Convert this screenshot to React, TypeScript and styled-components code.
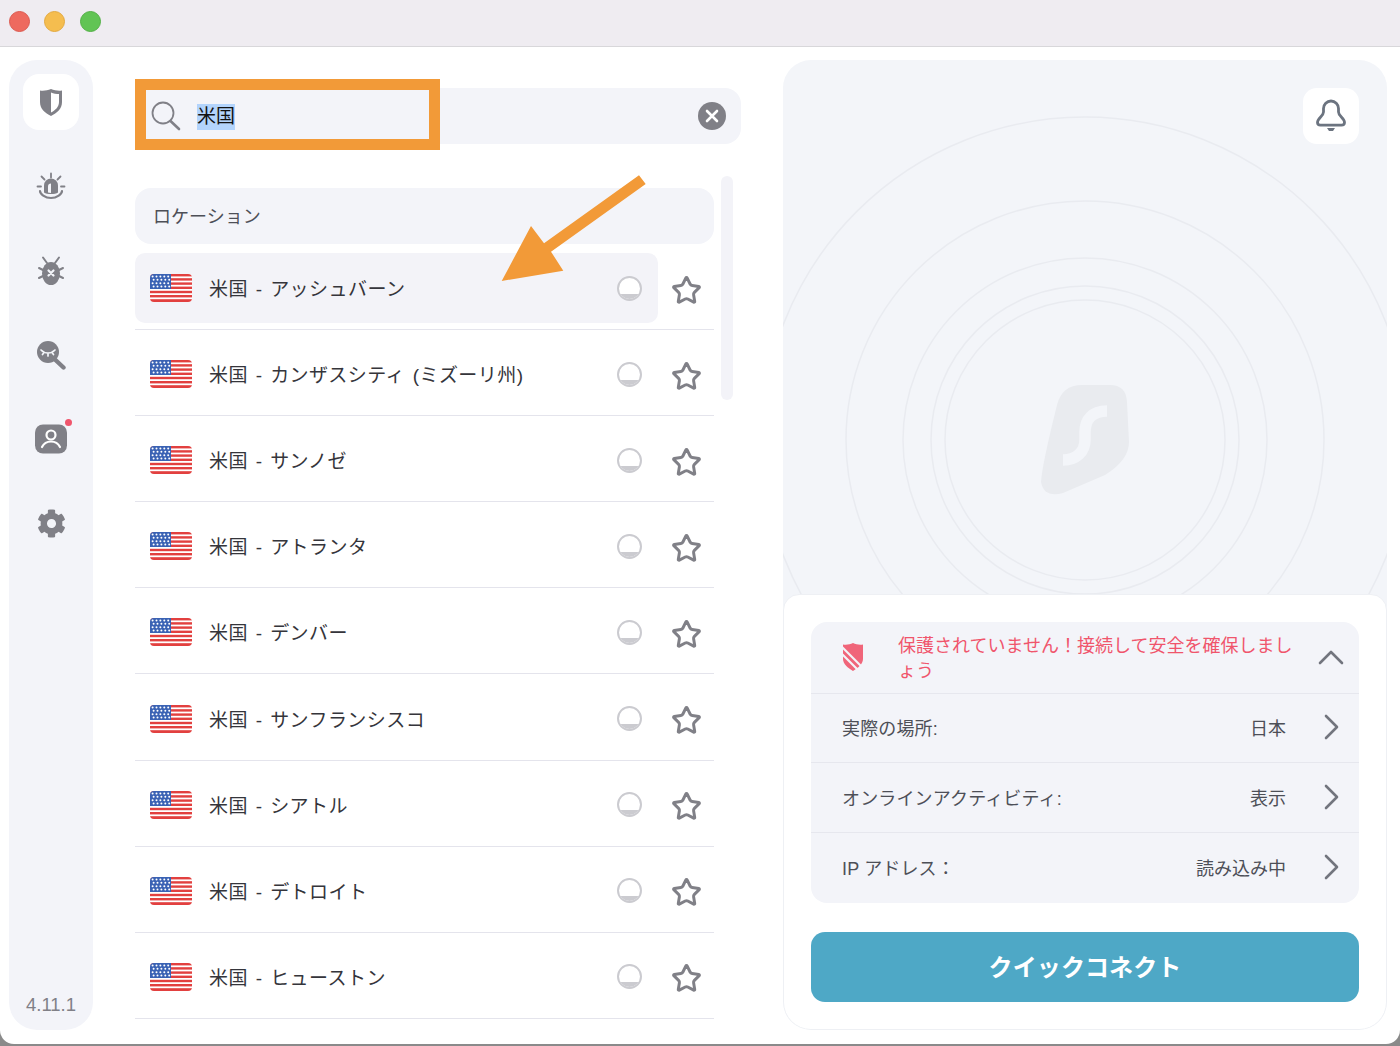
import { FaCog } from "react-icons/fa";
import { Star } from "lucide-react";
import styled, { createGlobalStyle } from "styled-components";

const GlobalStyle = createGlobalStyle`
  html, body {
    margin: 0;
    padding: 0;
    background: #8a8a8a;
  }
  body {
    font-family: "Liberation Sans", "Noto Sans CJK JP", sans-serif;
    color: #3a3a40;
  }
  * {
    box-sizing: border-box;
  }
`;

const Page = styled.div`
  width: 1400px;
  height: 1046px;
  overflow: hidden;
`;
const Window = styled.div`
  width: 1400px;
  height: 1044px;
  overflow: hidden;
  background: #fff;
  border-radius: 0 0 14px 14px;
  display: flex;
  flex-direction: column;
`;
const TitleBar = styled.div`
  height: 47px;
  flex: none;
  background: #efecf1;
  border-bottom: 1px solid #d8d7da;
  display: flex;
  align-items: flex-start;
  gap: 14.5px;
  padding: 10.5px 0 0 8.5px;
`;
const TrafficLight = styled.span<{ $color: string; $edge: string }>`
  width: 21px;
  height: 21px;
  border-radius: 50%;
  background: ${(p) => p.$color};
  border: 1px solid ${(p) => p.$edge};
`;
const Main = styled.div`
  flex: 1;
  display: grid;
  grid-template-columns: 84px 606px 604px;
  column-gap: 42px;
  padding: 13px 13px 14px 9px;
  min-height: 0;
`;

/* sidebar */
const Sidebar = styled.nav`
  background: #f3f4f9;
  border-radius: 28px;
  padding: 14px 0;
  display: flex;
  flex-direction: column;
  align-items: center;
  gap: 28.3px;
`;
const NavItem = styled.div<{ $active?: boolean }>`
  position: relative;
  width: 56px;
  height: 56px;
  flex: none;
  display: flex;
  align-items: center;
  justify-content: center;
  border-radius: 16px;
  background: ${(p) => (p.$active ? "#fff" : "transparent")};
  color: #808087;
`;
const NavDot = styled.span`
  position: absolute;
  top: 8px;
  right: 7px;
  width: 7px;
  height: 7px;
  border-radius: 50%;
  background: #f0556c;
`;
const Version = styled.div`
  margin-top: auto;
  font-size: 18.5px;
  color: #808087;
`;

/* middle column */
const Column = styled.section`
  position: relative;
  padding-top: 28px;
  display: flex;
  flex-direction: column;
  min-height: 0;
`;
const SearchBar = styled.div`
  position: relative;
  height: 56px;
  flex: none;
  background: #f3f4f9;
  border-radius: 16px;
  display: flex;
  align-items: center;
  padding: 0 15px 0 16px;
`;
const SearchFrame = styled.div`
  position: absolute;
  left: 0;
  top: -9px;
  width: 305px;
  height: 71px;
  border: 11px solid #f29a38;
  pointer-events: none;
`;
const SearchText = styled.span`
  margin: 2px 0 0 16px;
  font-size: 19px;
  line-height: 26px;
  color: #111;
  background: #b3d4fc;
`;
const ClearButton = styled.span`
  margin-left: auto;
  width: 28px;
  height: 28px;
  border-radius: 50%;
  background: #808087;
  display: flex;
  align-items: center;
  justify-content: center;
`;
const ListArea = styled.div`
  flex: 1;
  margin-top: 32px;
  display: flex;
  gap: 7px;
  min-height: 0;
  overflow: hidden;
`;
const List = styled.div`
  width: 579px;
  flex: none;
  padding-top: 12px;
`;
const Scrollbar = styled.div`
  width: 12px;
  height: 224px;
  border-radius: 6px;
  background: #f3f3f8;
`;
const ListHeader = styled.div`
  height: 56px;
  background: #f3f4f9;
  border-radius: 16px;
  display: flex;
  align-items: center;
  padding: 0 0 2px 18px;
  font-size: 18px;
  color: #4d4f57;
`;
const Row = styled.div`
  height: 86.1px;
  padding: 9px 0 6px;
  border-bottom: 1px solid #e4e4ec;
  display: flex;
`;
const RowMain = styled.div<{ $active?: boolean }>`
  width: 523px;
  flex: none;
  display: flex;
  align-items: center;
  padding: 0 16px 0 15px;
  border-radius: 10px;
  background: ${(p) => (p.$active ? "#f3f3f8" : "transparent")};
`;
const RowName = styled.span`
  margin: 0 0 1px 17px;
  flex: 1;
  font-size: 19px;
  letter-spacing: 0.45px;
  word-spacing: 2px;
  white-space: nowrap;
  color: #35353b;
`;
const Ping = styled.span`
  position: relative;
  width: 25px;
  height: 25px;
  border-radius: 50%;
  border: 2px solid #cbcbd0;
  overflow: hidden;
  background: #fff;
  &::after {
    content: "";
    position: absolute;
    left: 0;
    right: 0;
    bottom: 0;
    height: 5px;
    background: #cbcbd0;
  }
`;
const StarCell = styled.span`
  flex: 1;
  display: flex;
  align-items: center;
  justify-content: center;
  padding-top: 4px;
  color: #808087;
`;
const ArrowMark = styled.svg`
  position: absolute;
  left: 365px;
  top: 115px;
  pointer-events: none;
`;

/* right panel */
const Panel = styled.section`
  background: #f3f5f9;
  border-radius: 28px;
  display: flex;
  flex-direction: column;
  overflow: hidden;
  min-height: 0;
`;
const Stage = styled.div`
  position: relative;
  flex: 1;
  display: flex;
  justify-content: center;
  overflow: hidden;
`;
const Rings = styled.svg`
  position: absolute;
  inset: 0;
`;
const Logo = styled.svg`
  position: relative;
  margin: 300px 10px 0 0;
`;
const BellTile = styled.div`
  position: absolute;
  top: 28px;
  right: 28px;
  width: 56px;
  height: 56px;
  border-radius: 14px;
  background: #fff;
  display: flex;
  align-items: center;
  justify-content: center;
`;
const Card = styled.div`
  height: 436px;
  flex: none;
  background: #fff;
  border: 1px solid #eef0f4;
  border-radius: 16px 16px 28px 28px;
  padding: 27px;
  display: flex;
  flex-direction: column;
  gap: 29px;
`;
const InfoBox = styled.div`
  height: 281px;
  flex: none;
  background: #f3f4f9;
  border-radius: 16px;
  display: flex;
  flex-direction: column;
`;
const InfoRow = styled.div<{ $height: number; $last?: boolean }>`
  height: ${(p) => p.$height}px;
  flex: none;
  display: flex;
  align-items: center;
  padding: 0 15px 2px 31px;
  font-size: 18px;
  letter-spacing: 0.15px;
  color: #4d4f57;
  border-bottom: ${(p) => (p.$last ? "none" : "1px solid #e6e7ee")};
`;
const WarnText = styled.div`
  flex: 1;
  margin-left: 34px;
  padding-top: 5px;
  color: #f0556c;
  line-height: 25px;
  font-size: 18px;
  letter-spacing: 0;
`;
const InfoValue = styled.span`
  margin-left: auto;
  margin-right: 38px;
  letter-spacing: 0;
`;
const ChevronRightIcon = styled.svg`
  margin-right: 4px;
`;
const ConnectButton = styled.button`
  height: 70px;
  flex: none;
  border: none;
  border-radius: 14px;
  padding: 0 0 3px;
  background: #4ea8c6;
  color: #fff;
  font-family: inherit;
  font-size: 24px;
  font-weight: 700;
  letter-spacing: 0.1px;
`;

const locations = [
  "米国 - アッシュバーン",
  "米国 - カンザスシティ (ミズーリ州)",
  "米国 - サンノゼ",
  "米国 - アトランタ",
  "米国 - デンバー",
  "米国 - サンフランシスコ",
  "米国 - シアトル",
  "米国 - デトロイト",
  "米国 - ヒューストン",
];

const details = [
  { label: "実際の場所:", value: "日本", height: 69 },
  { label: "オンラインアクティビティ:", value: "表示", height: 70 },
  { label: "IP アドレス：", value: "読み込み中", height: 70 },
];

const UsFlag = () => (
  <svg width="42" height="28" viewBox="0 0 42 28">
    <defs>
      <clipPath id="flag-edge">
        <rect width="42" height="28" rx="4" />
      </clipPath>
    </defs>
    <g clipPath="url(#flag-edge)">
      <rect width="42" height="28" fill="#fff" />
      {[0, 1, 2, 3, 4, 5, 6].map((i) => (
        <rect key={i} y={i * 4.2} width="42" height={i === 6 ? 3.4 : 2.4} fill="#e2403f" />
      ))}
      <rect width="21" height="15" fill="#3a62b4" />
      {[0, 1, 2, 3].map((r) =>
        [0, 1, 2, 3, 4].map((c) => (
          <circle key={`${r}-${c}`} cx={2.6 + c * 3.9 + (r % 2) * 1} cy={2.4 + r * 3.4} r="1" fill="#fff" />
        ))
      )}
    </g>
  </svg>
);

const ChevronRight = () => (
  <ChevronRightIcon width="16" height="26" viewBox="0 0 16 26">
    <path d="M2 2l11 11L2 24" fill="none" stroke="#72757e" strokeWidth="2.6" strokeLinecap="round" strokeLinejoin="round" />
  </ChevronRightIcon>
);

const App = () => {
  return (
    <Page>
      <GlobalStyle />
      <Window>
        <TitleBar>
          <TrafficLight $color="#ee6a5f" $edge="#dc5a50" />
          <TrafficLight $color="#f5bd4f" $edge="#e3a93f" />
          <TrafficLight $color="#61c454" $edge="#53b046" />
        </TitleBar>
        <Main>
          <Sidebar>
            <NavItem $active>
              <svg width="24" height="28" viewBox="0 0 24 28">
                <path d="M12 1C8.500 2.500 4.500 3 1 2.500V14c0 7 5 11 11 14 6-3 11-7 11-14V2.500C19.500 3 15.500 2.500 12 1z" fill="#808087" />
                <path d="M12 4.500c2.500 1 5.500 1.500 8 1.500v8c0 5-4 8.500-8 10.500z" fill="#fff" />
              </svg>
            </NavItem>
            <NavItem>
              <svg width="30" height="30" viewBox="0 -1.500 30 30" fill="none" stroke="#808087" strokeWidth="1.800" strokeLinecap="round">
                <path d="M15 1v4M5.500 4l3 3M24.500 4l-3 3M1.500 14h3.500M25 14h3.500" />
                <path d="M8 20v-7a7 7 0 0 1 14 0v7c-3 2-11 2-14 0z" fill="#808087" stroke="none" />
                <path d="M12 20v-6a3 3 0 0 1 3-3v9.500z" fill="#f3f4f9" stroke="none" />
                <path d="M4 18.500c0 3 5 7 11 7s11-4 11-7" strokeWidth="2.200" />
              </svg>
            </NavItem>
            <NavItem>
              <svg width="30" height="30" viewBox="0 0 30 30" fill="none" stroke="#808087" strokeWidth="2" strokeLinecap="round">
                <path d="M7 1.500l4 5.500M23 1.500l-4 5.500M3 12l4 2M27 12l-4 2M3 22l4-2M27 22l-4-2" />
                <ellipse cx="15" cy="17.500" rx="9" ry="11.500" fill="#808087" stroke="none" />
                <path d="M12.500 14.500l5 5M17.500 14.500l-5 5" stroke="#f3f4f9" strokeWidth="2.200" />
              </svg>
            </NavItem>
            <NavItem>
              <svg width="30" height="30" viewBox="0 0 30 30" fill="none" strokeLinecap="round">
                <circle cx="12" cy="12" r="11" fill="#808087" />
                <path d="M19.500 20l8 7.500" stroke="#808087" strokeWidth="4.400" />
                <path d="M5 10c4 4 10 4 14 0M8 12.500l-1.500 2M12 13.500v2.500M16 12.500l1.500 2" stroke="#f3f4f9" strokeWidth="1.700" />
              </svg>
            </NavItem>
            <NavItem>
              <svg width="32" height="30" viewBox="0 0 32 30" fill="none" stroke="#fff" strokeWidth="2.200" strokeLinecap="round">
                <rect x="0" y="0.500" width="32" height="29" rx="8" fill="#808087" stroke="none" />
                <circle cx="16" cy="11" r="4.500" />
                <path d="M7 23c2-4 5-5.500 9-5.500s7 1.500 9 5.500" />
              </svg>
              <NavDot />
            </NavItem>
            <NavItem>
              <FaCog size={29} color="#808087" />
            </NavItem>
            <Version>4.11.1</Version>
          </Sidebar>

          <Column>
            <SearchBar>
              <svg width="30" height="30" viewBox="0 0 30 30" fill="none" stroke="#808087" strokeLinecap="round">
                <circle cx="12" cy="12" r="10.500" strokeWidth="1.800" />
                <path d="M19.500 20l8.500 8" strokeWidth="2.600" />
              </svg>
              <SearchText>米国</SearchText>
              <ClearButton>
                <svg width="14" height="14" viewBox="0 0 14 14">
                  <path d="M2 2l10 10M12 2L2 12" stroke="#fff" strokeWidth="2.600" strokeLinecap="round" />
                </svg>
              </ClearButton>
              <SearchFrame />
            </SearchBar>
            <ListArea>
              <List>
                <ListHeader>ロケーション</ListHeader>
                {locations.map((name, i) => (
                  <Row key={name}>
                    <RowMain $active={i === 0}>
                      <UsFlag />
                      <RowName>{name}</RowName>
                      <Ping />
                    </RowMain>
                    <StarCell>
                      <Star size={31} strokeWidth={2.300} />
                    </StarCell>
                  </Row>
                ))}
              </List>
              <Scrollbar />
            </ListArea>
            <ArrowMark width="152" height="112" viewBox="0 0 152 112">
              <path d="M139 .3l6.700 8.700L51 76.700l12.300 19L1.700 106 31 51l13 17.300z" fill="#f29a38" />
            </ArrowMark>
          </Column>

          <Panel>
            <Stage>
              <Rings width="604" height="534" viewBox="0 0 604 534" fill="none" stroke="#e9ebf0" strokeWidth="1.500">
                <circle cx="302" cy="380" r="323" />
                <circle cx="302" cy="380" r="239" />
                <circle cx="302" cy="380" r="182" />
                <circle cx="302" cy="380" r="154" />
                <circle cx="302" cy="380" r="140" />
              </Rings>
              <Logo width="160" height="160" viewBox="0 0 160 160">
                <path d="M82 25h28q16 0 17 17l2 40q0 18-24 33l-42 18q-19 5-22-11 1-17 16-77 5-20 25-20z" fill="#e9ebef" />
                <path d="M107 51c-15 0-22 9-22 21v8c0 12-9 20-22 20" fill="none" stroke="#f3f5f9" strokeWidth="11.500" />
              </Logo>
              <BellTile>
                <svg width="30" height="34" viewBox="0 0 30 34" fill="none">
                  <path d="M15 2a7.500 7.500 0 0 0-7.500 7.500V13c0 4-6 6-6 10.500 0 1.800 1.200 2.700 3 2.700h21c1.800 0 3-.9 3-2.700C28.500 19 22.500 17 22.500 13V9.500A7.500 7.500 0 0 0 15 2z" stroke="#6c7480" strokeWidth="2.800" />
                  <path d="M11 29h8l-2 3h-4z" fill="#6c7480" />
                </svg>
              </BellTile>
            </Stage>
            <Card>
              <InfoBox>
                <InfoRow $height={72}>
                  <svg width="22" height="30" viewBox="0 0 22 30">
                    <path d="M11 1C8 2.500 4.500 3 1 2.500V17c0 5 5 9 10 12 5-3 10-7 10-12V2.500C17.500 3 14 2.500 11 1z" fill="#f0657a" />
                    <path d="M-1 4l24 24M-1 11l17 17" stroke="#f3f4f9" strokeWidth="2.200" />
                  </svg>
                  <WarnText>
                    保護されていません！接続して安全を確保しまし
                    <br />
                    ょう
                  </WarnText>
                  <svg width="26" height="16" viewBox="0 0 26 16">
                    <path d="M2 14L13 3l11 11" fill="none" stroke="#72757e" strokeWidth="2.600" strokeLinecap="round" strokeLinejoin="round" />
                  </svg>
                </InfoRow>
                {details.map((d, i) => (
                  <InfoRow key={d.label} $height={d.height} $last={i === details.length - 1}>
                    <span>{d.label}</span>
                    <InfoValue>{d.value}</InfoValue>
                    <ChevronRight />
                  </InfoRow>
                ))}
              </InfoBox>
              <ConnectButton>クイックコネクト</ConnectButton>
            </Card>
          </Panel>
        </Main>
      </Window>
    </Page>
  );
};

export default App;
